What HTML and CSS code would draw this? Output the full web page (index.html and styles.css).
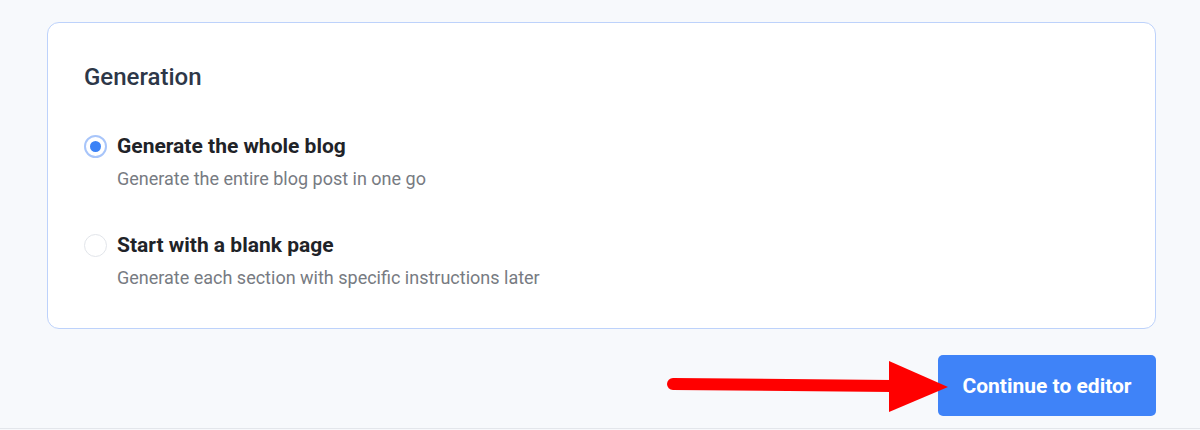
FILE: index.html
```html
<!DOCTYPE html>
<html lang="en">
<head>
 <meta charset="UTF-8">
 <meta name="viewport" content="width=device-width, initial-scale=1.0">
 <title>Generation</title>
 <link rel="stylesheet" href="styles.css">
</head>
<body>
 <div class="page">
 <section class="card">
 <h2 class="card-title">Generation</h2>
 <label class="option">
 <span class="radio checked"></span>
 <span class="option-text">
 <span class="option-label">Generate the whole blog</span>
 <span class="option-desc">Generate the entire blog post in one go</span>
 </span>
 </label>
 <label class="option">
 <span class="radio"></span>
 <span class="option-text">
 <span class="option-label">Start with a blank page</span>
 <span class="option-desc">Generate each section with specific instructions later</span>
 </span>
 </label>
 </section>
 <div class="actions">
 <button class="btn-primary" type="button">Continue to editor</button>
 </div>
 </div>
 <svg class="annotation" width="1200" height="430" viewBox="0 0 1200 430">
 <line x1="673" y1="384" x2="892" y2="386" stroke="#ff0000" stroke-width="12" stroke-linecap="round"/>
 <polygon points="889,361 889,412 948,387" fill="#ff0000"/>
 </svg>
</body>
</html>
```

FILE: styles.css
```css
html, body {
margin: 0;
padding: 0;
}
body {
font-family: Roboto, 'Liberation Sans', sans-serif;
background-color: #f7f9fc;
position: relative;
width: 1200px;
height: 430px;
overflow: hidden;
}
.page {
box-sizing: border-box;
height: 429px;
padding: 22px 44px 0 47px;
border-bottom: 1px solid #e3e6eb;
}
.card {
background-color: #fff;
border: 1px solid #bdd2fb;
border-radius: 12px;
padding: 40px 36px 38px;
}
.card-title {
margin: 0 0 41px;
font-size: 24px;
line-height: 28px;
font-weight: 500;
color: #2d3748;
}
.option {
display: flex;
gap: 10px;
align-items: flex-start;
}
.option + .option {
margin-top: 40px;
}
.radio {
box-sizing: border-box;
width: 23px;
height: 23px;
margin-top: 3px;
border-radius: 50%;
border: 1px solid #e2e5ea;
background-color: #fff;
display: flex;
align-items: center;
justify-content: center;
}
.radio.checked {
border: 2px solid #a8c5fa;
}
.radio.checked::after {
content: "";
width: 11px;
height: 11px;
border-radius: 50%;
background-color: #3b82f6;
}
.option-text {
display: flex;
flex-direction: column;
gap: 7px;
}
.option-label {
font-size: 21px;
line-height: 28px;
font-weight: 700;
color: #1f2328;
}
.option-desc {
font-size: 18px;
line-height: 24px;
color: #777b82;
}
.actions {
display: flex;
justify-content: flex-end;
margin-top: 26px;
}
.btn-primary {
font-family: inherit;
font-size: 21px;
font-weight: 700;
color: #fff;
background-color: #3f83f8;
border: none;
border-radius: 5px;
width: 218px;
height: 61px;
cursor: pointer;
}
.annotation {
position: absolute;
left: 0;
top: 0;
pointer-events: none;
}
```
